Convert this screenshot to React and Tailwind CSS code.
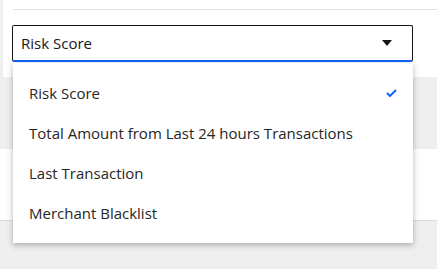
import { useState } from "react";

const options = [
  "Risk Score",
  "Total Amount from Last 24 hours Transactions",
  "Last Transaction",
  "Merchant Blacklist",
];

export default function App() {
  const [selected, setSelected] = useState("Risk Score");

  return (
    <div className="relative w-[437px] h-[269px] overflow-hidden bg-[#efefef] font-['Open_Sans',sans-serif] text-[15px]">
      {/* Header area */}
      <div className="h-[77px] bg-white ml-[3px] pt-[9px]">
        <div className="ml-[10px] border-t border-[#e0e0e0]" />
        <div className="ml-[9px] mt-[15px] w-[401px] h-[37px] flex items-center justify-between pl-[8px] pr-[20px] border border-b-2 border-[#161616] border-b-[#0f62fe] rounded-[2px] text-[#161616]">
          <span>{selected}</span>
          <svg width="10" height="6" viewBox="0 0 10 6">
            <path d="M0 0h10L5 6z" fill="#161616" />
          </svg>
        </div>
      </div>

      {/* Card below */}
      <div className="mt-[72px] h-[72px] bg-white border-b border-[#dcdcdc]" />

      {/* Dropdown menu */}
      <ul className="absolute left-[13px] top-[63px] w-[400px] bg-white py-[10px] shadow-[0_2px_6px_rgba(0,0,0,0.3)]">
        {options.map((opt) => (
          <li
            key={opt}
            onClick={() => setSelected(opt)}
            className="h-[40px] flex items-center justify-between pl-[16px] pr-[16px] text-[#262626] cursor-pointer"
          >
            <span>{opt}</span>
            {opt === selected && (
              <svg width="11" height="8" viewBox="0 0 11 8">
                <path d="M1 4l3 3 6-6" fill="none" stroke="#0f62fe" strokeWidth="2" />
              </svg>
            )}
          </li>
        ))}
      </ul>
    </div>
  );
}
